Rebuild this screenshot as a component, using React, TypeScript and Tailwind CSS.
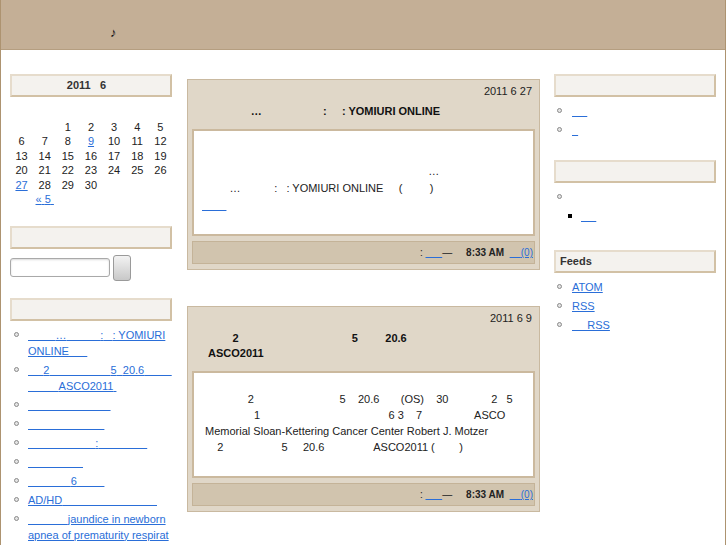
import type { ReactNode } from "react";

// blank runs stand in for the glyphs that did not render in the original
const s = (n: number) => "\u00a0".repeat(n);

const LINK = "text-[#2a6ed8] underline";

function Heading({ children, center }: { children?: ReactNode; center?: boolean }) {
  return (
    <div
      className={
        "h-[23px] border-2 border-t-[#e6dccc] border-l-[#e6dccc] border-b-[#d2c1a5] border-r-[#d2c1a5] bg-[#f4f2ee] text-[11px] font-bold leading-[19px] text-[#333] " +
        (center ? "text-center" : "pl-[4px]")
      }
    >
      {children ?? s(1)}
    </div>
  );
}

function Ring({ right }: { right?: boolean }) {
  return (
    <span
      className={
        "mt-[5px] h-[5px] w-[5px] shrink-0 rounded-full border border-[#8a8a8a] bg-[#e4e4e4] " +
        (right ? "ml-[3px] mr-[10px]" : "ml-[4px] mr-[9px]")
      }
    />
  );
}

const weeks = [
  ["", "", "1", "2", "3", "4", "5"],
  ["6", "7", "8", "9", "10", "11", "12"],
  ["13", "14", "15", "16", "17", "18", "19"],
  ["20", "21", "22", "23", "24", "25", "26"],
  ["27", "28", "29", "30", "", "", ""],
];
const linked = ["9", "27"];

const recent: ReactNode[] = [
  <>
    {s(9)}…{s(11)}:{s(3)}: YOMIURI
    <br />
    ONLINE{s(6)}
  </>,
  <>
    {s(5)}2{s(20)}5{s(2)}20.6{s(9)}
    <br />
    {s(10)}ASCO2011{s(1)}
  </>,
  s(27),
  s(25),
  <>
    {s(22)}:{s(16)}
  </>,
  s(18),
  <>
    {s(14)}6{s(9)}
  </>,
  <>AD/HD{s(31)}</>,
  <>
    {s(13)}jaundice in newborn
    <br />
    apnea of prematurity respirat
  </>,
];

function Calendar() {
  return (
    <div>
      <Heading center>
        2011{s(3)}6{s(3)}
      </Heading>
      <div className="mt-[8px] grid grid-cols-7 text-center text-[11px] leading-[14.5px] text-[#222]">
        {Array.from({ length: 7 }).map((_, i) => (
          <div key={"h" + i}>{s(1)}</div>
        ))}
        {weeks.flat().map((d, i) => (
          <div key={i}>{linked.includes(d) ? <a className={LINK}>{d}</a> : d || s(1)}</div>
        ))}
        <div>{s(1)}</div>
        <div>
          <a className={LINK}>
            «{s(1)}5{s(1)}
          </a>
        </div>
      </div>
    </div>
  );
}

function Footer() {
  return (
    <div className="mt-[5px] h-[23px] border border-[#c4b398] bg-[#d1c4ae] pr-[1px] text-right text-[10px] leading-[21px] text-[#222]">
      :{s(1)}
      <a className={LINK}>{s(6)}</a>—{s(5)}
      <b>8:33 AM</b>
      {s(2)}
      <a className={LINK}>
        {s(4)}(0)
      </a>
    </div>
  );
}

function Post({
  date,
  title,
  body,
  bodyClass,
}: {
  date: string;
  title: ReactNode;
  body: ReactNode;
  bodyClass: string;
}) {
  return (
    <div className="border border-[#c9b9a0] bg-[#e0d7c8] px-[4px] pb-[5px] pt-[4px]">
      <div className="pr-[3px] text-right text-[11px] leading-[15px] text-[#222]">{date}</div>
      <div className="mt-[5px] whitespace-nowrap pl-[16px] text-[11px] font-bold leading-[15px] text-[#111]">
        {title}
      </div>
      <div
        className={
          "mt-[10px] h-[107px] whitespace-nowrap border-2 border-[#cbb99e] bg-white pl-[8px] text-[11px] text-[#222] " +
          bodyClass
        }
      >
        {body}
      </div>
      <Footer />
    </div>
  );
}

export default function App() {
  return (
    <div className="min-h-[545px] w-[726px] border-x border-[#ad9370] bg-white font-['Liberation_Sans','Noto_Sans_CJK_JP',sans-serif]">
      <div className="h-[50px] border-b border-[#b59e80] bg-[#c4af96] pl-[109px] pt-[25px] text-[13px] leading-[15px] text-[#111]">
        ♪
      </div>

      <div className="flex items-start pl-[9px] pt-[24px]">
        {/* left column */}
        <div className="w-[162px] shrink-0">
          <Calendar />

          <div className="mt-[19px]">
            <Heading />
            <div className="mt-[6px] flex items-center gap-[3px]">
              <input className="h-[19px] w-[100px] rounded-[3px] border border-[#a9a9a9] bg-white shadow-[inset_0_1px_2px_rgba(0,0,0,0.15)]" />
              <button className="h-[26px] w-[18px] rounded-[3px] border border-[#9a9a9a] bg-linear-to-b from-[#f3f3f3] to-[#c8c8c8]" />
            </div>
          </div>

          <div className="mt-[17px]">
            <Heading />
            <ul className="mt-[6px] text-[11px] leading-4">
              {recent.map((r, i) => (
                <li key={i} className="mb-[3px] flex whitespace-nowrap">
                  <Ring />
                  <a className={LINK}>{r}</a>
                </li>
              ))}
            </ul>
          </div>
        </div>

        {/* posts */}
        <div className="ml-[15px] mt-[5px] flex w-[353px] shrink-0 flex-col gap-[36px]">
          <Post
            date="2011 6 27"
            title={
              <>
                {s(14)}…{s(20)}:{s(5)}: YOMIURI ONLINE
              </>
            }
            bodyClass="pt-[32px] leading-[17px]"
            body={
              <>
                <div>{s(74)}…</div>
                <div>
                  {s(9)}…{s(11)}:{s(3)}: YOMIURI ONLINE{s(5)}({s(9)})
                </div>
                <div>
                  <a className={LINK}>{s(8)}</a>
                </div>
              </>
            }
          />
          <Post
            date="2011 6 9"
            title={
              <>
                {s(8)}2{s(37)}5{s(9)}20.6
                <br />
                ASCO2011
              </>
            }
            bodyClass="pt-[18px] leading-[16px]"
            body={
              <>
                <div>
                  {s(15)}2{s(28)}5{s(4)}20.6{s(7)}(OS){s(4)}30{s(14)}2{s(3)}5
                </div>
                <div>
                  {s(17)}1{s(42)}6 3{s(4)}7{s(17)}ASCO
                </div>
                <div>{s(1)}Memorial Sloan-Kettering Cancer Center Robert J. Motzer</div>
                <div>
                  {s(5)}2{s(19)}5{s(5)}20.6{s(16)}ASCO2011 ({s(8)})
                </div>
              </>
            }
          />
        </div>

        {/* right column */}
        <div className="ml-[14px] w-[162px] shrink-0 text-[11px] leading-4">
          <Heading />
          <ul className="mt-[6px]">
            <li className="mb-[3px] flex">
              <Ring right />
              <a className={LINK}>{s(5)}</a>
            </li>
            <li className="mb-[3px] flex">
              <Ring right />
              <a className={LINK}>{s(2)}</a>
            </li>
          </ul>

          <div className="mt-[22px]">
            <Heading />
          </div>
          <ul className="mt-[6px]">
            <li className="mb-[3px]">
              <div className="flex">
                <Ring right />
                {s(1)}
              </div>
              <ul className="mt-[3px] pl-[9px]">
                <li className="flex">
                  <span className="ml-[5px] mr-[9px] mt-[6px] h-[4px] w-[4px] shrink-0 bg-black" />
                  <a className={LINK}>{s(5)}</a>
                </li>
              </ul>
            </li>
          </ul>

          <div className="mt-[26px]">
            <Heading>Feeds</Heading>
          </div>
          <ul className="mt-[6px]">
            {["ATOM", "RSS", s(5) + "RSS"].map((f) => (
              <li key={f} className="mb-[3px] flex">
                <Ring right />
                <a className={LINK}>{f}</a>
              </li>
            ))}
          </ul>
        </div>
      </div>
    </div>
  );
}
